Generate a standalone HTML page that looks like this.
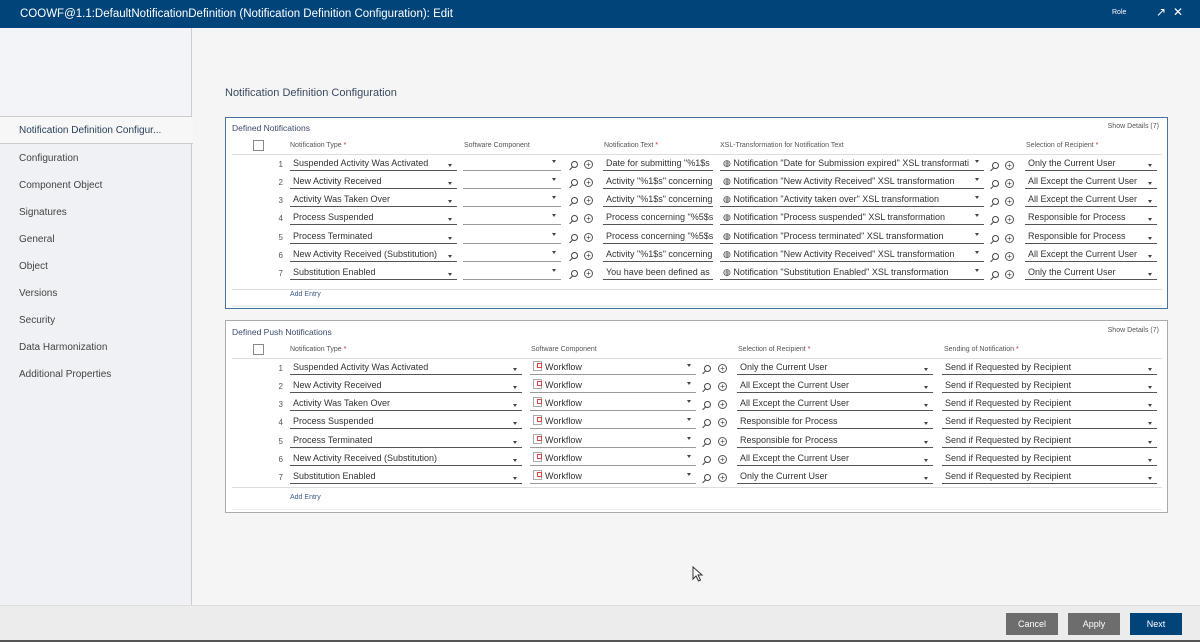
<!DOCTYPE html>
<html><head><meta charset="utf-8"><style>
*{margin:0;padding:0;box-sizing:border-box}
body{width:1200px;height:642px;overflow:hidden;background:#f5f5f5;font-family:"Liberation Sans",sans-serif;color:#333;position:relative}
.a{position:absolute}
#hdr{left:0;top:0;width:1200px;height:28px;background:#00447a;color:#fff;font-size:11.5px;line-height:28px;padding-left:20px}
#side{left:0;top:28px;width:192px;height:577px;background:#f0f1f5;border-right:1px solid #ccc}
#sidetop{left:0;top:28px;width:192px;height:89px;background:#f3f4f7;border-right:1px solid #ccc;border-bottom:1px solid #ccc}
#sel{left:0;top:117px;width:193px;height:27px;background:#f7f7f7;border-bottom:1px solid #ccc;font-size:10px;line-height:27px;padding-left:19px;color:#2a3f5a}
.nav{left:19px;font-size:10px;color:#444}
#ttl{left:225px;top:87px;font-size:11px;color:#3a4a60}
.panel{left:225px;width:943px;background:#fff}
.ptitle{font-size:8.5px;color:#3a4a6a}
.hl{font-size:7px;color:#555}
.hl b{color:#d22;font-weight:normal}
.f{position:absolute;height:16px;border-bottom:1px solid #555;font-size:9px;line-height:17px;padding-left:3px;white-space:nowrap;overflow:hidden;color:#333}
.f.l{border-bottom-color:#999}
.dd:after{content:"";position:absolute;right:5px;top:9px;border-left:2.5px solid transparent;border-right:2.5px solid transparent;border-top:3px solid #444}
.dd2:after{content:"";position:absolute;right:5px;top:5px;border-left:2.5px solid transparent;border-right:2.5px solid transparent;border-top:3px solid #444}
.n{position:absolute;font-size:8px;color:#555;text-align:right;width:12px}
.pl{position:absolute;width:9px;height:9px;border:1px solid #555;border-radius:50%;font-size:8px;line-height:7px;text-align:center;color:#444}
.sr{position:absolute;width:7px;height:7px;border:1px solid #444;border-radius:50%}
.sr:after{content:"";position:absolute;left:-3px;top:6px;width:4px;height:1px;background:#444;transform:rotate(-45deg)}
.wf{display:inline-block;width:9px;height:10px;border:1px solid #aaa;vertical-align:-1px;margin-right:3px;position:relative}
.wf:after{content:"";position:absolute;left:3px;top:1px;width:3px;height:3px;border:1px solid #d44}
.btn{top:613px;width:52px;height:22px;color:#fff;font-size:9px;line-height:22px;text-align:center}
</style></head><body>
<div id="hdr" class="a">COOWF@1.1:DefaultNotificationDefinition (Notification Definition Configuration): Edit</div>
<div class="a" style="left:1112px;top:9px;font-size:7px;color:#fff">Role</div>
<div class="a" style="left:1156px;top:5px;font-size:12px;color:#fff">↗</div>
<div class="a" style="left:1173px;top:5px;font-size:12px;color:#fff">✕</div>
<div id="side" class="a"></div>
<div id="sidetop" class="a"></div>
<div id="sel" class="a">Notification Definition Configur...</div>
<div class="a nav" style="top:153px">Configuration</div>
<div class="a nav" style="top:180px">Component Object</div>
<div class="a nav" style="top:207px">Signatures</div>
<div class="a nav" style="top:234px">General</div>
<div class="a nav" style="top:261px">Object</div>
<div class="a nav" style="top:288px">Versions</div>
<div class="a nav" style="top:315px">Security</div>
<div class="a nav" style="top:342px">Data Harmonization</div>
<div class="a nav" style="top:369px">Additional Properties</div>
<div id="ttl" class="a">Notification Definition Configuration</div>

<div class="a panel" style="top:117px;height:192px;border:1px solid #4a739c">
<div class="a ptitle" style="left:6px;top:5px">Defined Notifications</div>
<div class="a hl" style="right:8px;top:5px">Show Details (7)</div>
<div class="a" style="left:27px;top:22px;width:11px;height:11px;border:1px solid #888;background:#fff"></div>
<div class="a hl" style="left:64px;top:24px">Notification Type <b>*</b></div>
<div class="a hl" style="left:238px;top:24px">Software Component</div>
<div class="a hl" style="left:378px;top:24px">Notification Text <b>*</b></div>
<div class="a hl" style="left:494px;top:24px">XSL-Transformation for Notification Text</div>
<div class="a hl" style="left:800px;top:24px">Selection of Recipient <b>*</b></div>
<div class="a" style="left:6px;top:36px;width:930px;height:1px;background:#ddd"></div>
<div class="a" style="left:6px;top:171px;width:930px;height:1px;background:#ddd"></div>
<div class="a" style="left:6px;top:187px;width:930px;height:2px;background:#eee"></div>
<div class="a" style="left:64px;top:173px;font-size:7px;color:#3a5a8a">Add Entry</div>
</div>

<div class="a panel" style="top:320px;height:193px;border:1px solid #aaa">
<div class="a ptitle" style="left:6px;top:6px">Defined Push Notifications</div>
<div class="a hl" style="right:8px;top:6px">Show Details (7)</div>
<div class="a" style="left:27px;top:23px;width:11px;height:11px;border:1px solid #888;background:#fff"></div>
<div class="a hl" style="left:64px;top:25px">Notification Type <b>*</b></div>
<div class="a hl" style="left:305px;top:25px">Software Component</div>
<div class="a hl" style="left:512px;top:25px">Selection of Recipient <b>*</b></div>
<div class="a hl" style="left:718px;top:25px">Sending of Notification <b>*</b></div>
<div class="a" style="left:6px;top:37px;width:930px;height:1px;background:#ddd"></div>
<div class="a" style="left:6px;top:166px;width:930px;height:1px;background:#ddd"></div>
<div class="a" style="left:6px;top:188px;width:930px;height:1px;background:#eee"></div>
<div class="a" style="left:64px;top:173px;font-size:7px;color:#3a5a8a">Add Entry</div>
</div>

<!-- panel 1 rows -->
<div class="a" style="left:0;top:155px">
<div class="n" style="left:271px;top:5px">1</div><div class="f dd" style="left:290px;width:167px">Suspended Activity Was Activated</div><div class="f l dd2" style="left:463px;width:98px"></div><div class="sr" style="left:571px;top:6px"></div><div class="pl" style="left:584px;top:5px">+</div><div class="f" style="left:603px;width:110px">Date for submitting "%1$s</div><div class="f dd2" style="left:720px;width:264px">◍ Notification "Date for Submission expired" XSL transformati</div><div class="sr" style="left:992px;top:7px"></div><div class="pl" style="left:1005px;top:6px">+</div><div class="f dd" style="left:1025px;width:132px">Only the Current User</div>
</div>
<div class="a" style="left:0;top:173px">
<div class="n" style="left:271px;top:5px">2</div><div class="f dd" style="left:290px;width:167px">New Activity Received</div><div class="f l dd2" style="left:463px;width:98px"></div><div class="sr" style="left:571px;top:6px"></div><div class="pl" style="left:584px;top:5px">+</div><div class="f" style="left:603px;width:110px">Activity "%1$s" concerning</div><div class="f dd2" style="left:720px;width:264px">◍ Notification "New Activity Received" XSL transformation</div><div class="sr" style="left:992px;top:7px"></div><div class="pl" style="left:1005px;top:6px">+</div><div class="f dd" style="left:1025px;width:132px">All Except the Current User</div>
</div>
<div class="a" style="left:0;top:191px">
<div class="n" style="left:271px;top:5px">3</div><div class="f dd" style="left:290px;width:167px">Activity Was Taken Over</div><div class="f l dd2" style="left:463px;width:98px"></div><div class="sr" style="left:571px;top:6px"></div><div class="pl" style="left:584px;top:5px">+</div><div class="f" style="left:603px;width:110px">Activity "%1$s" concerning</div><div class="f dd2" style="left:720px;width:264px">◍ Notification "Activity taken over" XSL transformation</div><div class="sr" style="left:992px;top:7px"></div><div class="pl" style="left:1005px;top:6px">+</div><div class="f dd" style="left:1025px;width:132px">All Except the Current User</div>
</div>
<div class="a" style="left:0;top:209px">
<div class="n" style="left:271px;top:5px">4</div><div class="f dd" style="left:290px;width:167px">Process Suspended</div><div class="f l dd2" style="left:463px;width:98px"></div><div class="sr" style="left:571px;top:6px"></div><div class="pl" style="left:584px;top:5px">+</div><div class="f" style="left:603px;width:110px">Process concerning "%5$s</div><div class="f dd2" style="left:720px;width:264px">◍ Notification "Process suspended" XSL transformation</div><div class="sr" style="left:992px;top:7px"></div><div class="pl" style="left:1005px;top:6px">+</div><div class="f dd" style="left:1025px;width:132px">Responsible for Process</div>
</div>
<div class="a" style="left:0;top:228px">
<div class="n" style="left:271px;top:5px">5</div><div class="f dd" style="left:290px;width:167px">Process Terminated</div><div class="f l dd2" style="left:463px;width:98px"></div><div class="sr" style="left:571px;top:6px"></div><div class="pl" style="left:584px;top:5px">+</div><div class="f" style="left:603px;width:110px">Process concerning "%5$s</div><div class="f dd2" style="left:720px;width:264px">◍ Notification "Process terminated" XSL transformation</div><div class="sr" style="left:992px;top:7px"></div><div class="pl" style="left:1005px;top:6px">+</div><div class="f dd" style="left:1025px;width:132px">Responsible for Process</div>
</div>
<div class="a" style="left:0;top:246px">
<div class="n" style="left:271px;top:5px">6</div><div class="f dd" style="left:290px;width:167px">New Activity Received (Substitution)</div><div class="f l dd2" style="left:463px;width:98px"></div><div class="sr" style="left:571px;top:6px"></div><div class="pl" style="left:584px;top:5px">+</div><div class="f" style="left:603px;width:110px">Activity "%1$s" concerning</div><div class="f dd2" style="left:720px;width:264px">◍ Notification "New Activity Received" XSL transformation</div><div class="sr" style="left:992px;top:7px"></div><div class="pl" style="left:1005px;top:6px">+</div><div class="f dd" style="left:1025px;width:132px">All Except the Current User</div>
</div>
<div class="a" style="left:0;top:264px">
<div class="n" style="left:271px;top:5px">7</div><div class="f dd" style="left:290px;width:167px">Substitution Enabled</div><div class="f l dd2" style="left:463px;width:98px"></div><div class="sr" style="left:571px;top:6px"></div><div class="pl" style="left:584px;top:5px">+</div><div class="f" style="left:603px;width:110px">You have been defined as</div><div class="f dd2" style="left:720px;width:264px">◍ Notification "Substitution Enabled" XSL transformation</div><div class="sr" style="left:992px;top:7px"></div><div class="pl" style="left:1005px;top:6px">+</div><div class="f dd" style="left:1025px;width:132px">Only the Current User</div>
</div>

<!-- panel 2 rows -->
<div class="a" style="left:0;top:359px">
<div class="n" style="left:271px;top:5px">1</div><div class="f dd" style="left:290px;width:232px">Suspended Activity Was Activated</div><div class="f l dd2" style="left:530px;width:166px"><span class="wf"></span>Workflow</div><div class="sr" style="left:704px;top:6px"></div><div class="pl" style="left:718px;top:5px">+</div><div class="f dd" style="left:737px;width:196px">Only the Current User</div><div class="f dd" style="left:942px;width:215px">Send if Requested by Recipient</div>
</div>
<div class="a" style="left:0;top:377px">
<div class="n" style="left:271px;top:5px">2</div><div class="f dd" style="left:290px;width:232px">New Activity Received</div><div class="f l dd2" style="left:530px;width:166px"><span class="wf"></span>Workflow</div><div class="sr" style="left:704px;top:6px"></div><div class="pl" style="left:718px;top:5px">+</div><div class="f dd" style="left:737px;width:196px">All Except the Current User</div><div class="f dd" style="left:942px;width:215px">Send if Requested by Recipient</div>
</div>
<div class="a" style="left:0;top:395px">
<div class="n" style="left:271px;top:5px">3</div><div class="f dd" style="left:290px;width:232px">Activity Was Taken Over</div><div class="f l dd2" style="left:530px;width:166px"><span class="wf"></span>Workflow</div><div class="sr" style="left:704px;top:6px"></div><div class="pl" style="left:718px;top:5px">+</div><div class="f dd" style="left:737px;width:196px">All Except the Current User</div><div class="f dd" style="left:942px;width:215px">Send if Requested by Recipient</div>
</div>
<div class="a" style="left:0;top:413px">
<div class="n" style="left:271px;top:5px">4</div><div class="f dd" style="left:290px;width:232px">Process Suspended</div><div class="f l dd2" style="left:530px;width:166px"><span class="wf"></span>Workflow</div><div class="sr" style="left:704px;top:6px"></div><div class="pl" style="left:718px;top:5px">+</div><div class="f dd" style="left:737px;width:196px">Responsible for Process</div><div class="f dd" style="left:942px;width:215px">Send if Requested by Recipient</div>
</div>
<div class="a" style="left:0;top:432px">
<div class="n" style="left:271px;top:5px">5</div><div class="f dd" style="left:290px;width:232px">Process Terminated</div><div class="f l dd2" style="left:530px;width:166px"><span class="wf"></span>Workflow</div><div class="sr" style="left:704px;top:6px"></div><div class="pl" style="left:718px;top:5px">+</div><div class="f dd" style="left:737px;width:196px">Responsible for Process</div><div class="f dd" style="left:942px;width:215px">Send if Requested by Recipient</div>
</div>
<div class="a" style="left:0;top:450px">
<div class="n" style="left:271px;top:5px">6</div><div class="f dd" style="left:290px;width:232px">New Activity Received (Substitution)</div><div class="f l dd2" style="left:530px;width:166px"><span class="wf"></span>Workflow</div><div class="sr" style="left:704px;top:6px"></div><div class="pl" style="left:718px;top:5px">+</div><div class="f dd" style="left:737px;width:196px">All Except the Current User</div><div class="f dd" style="left:942px;width:215px">Send if Requested by Recipient</div>
</div>
<div class="a" style="left:0;top:468px">
<div class="n" style="left:271px;top:5px">7</div><div class="f dd" style="left:290px;width:232px">Substitution Enabled</div><div class="f l dd2" style="left:530px;width:166px"><span class="wf"></span>Workflow</div><div class="sr" style="left:704px;top:6px"></div><div class="pl" style="left:718px;top:5px">+</div><div class="f dd" style="left:737px;width:196px">Only the Current User</div><div class="f dd" style="left:942px;width:215px">Send if Requested by Recipient</div>
</div>

<div class="a" style="left:0;top:605px;width:1200px;height:37px;background:#ececec;border-top:1px solid #ddd;border-bottom:2px solid #555"></div>
<div class="a btn" style="left:1006px;background:#6d6d6d">Cancel</div>
<div class="a btn" style="left:1068px;background:#6d6d6d">Apply</div>
<div class="a btn" style="left:1130px;background:#00447a">Next</div>
<svg class="a" style="left:692px;top:566px" width="12" height="17" viewBox="0 0 12 17"><path d="M1 1 L1 13 L4 10 L6.5 15 L8.5 14 L6 9 L10 9 Z" fill="#fff" stroke="#333" stroke-width="1"/></svg>
</body></html>
